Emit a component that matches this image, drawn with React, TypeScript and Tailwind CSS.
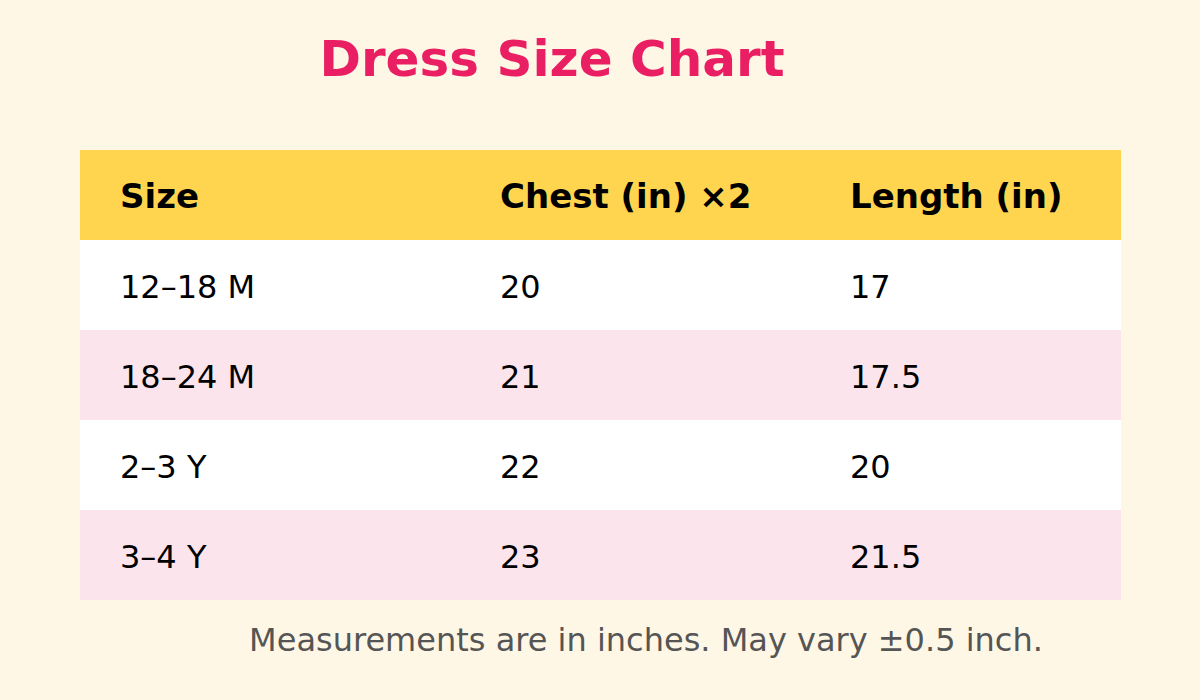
import React from 'react';

const rows = [
  { size: '12–18 M', chest: '20', length: '17' },
  { size: '18–24 M', chest: '21', length: '17.5' },
  { size: '2–3 Y', chest: '22', length: '20' },
  { size: '3–4 Y', chest: '23', length: '21.5' },
];

const App: React.FC = () => {
  return (
    <div
      className="w-[1200px] h-[700px] bg-[#fff7e6] flex flex-col"
      style={{ fontFamily: '"DejaVu Sans", Verdana, sans-serif' }}
    >
      {/* Title */}
      <div className="h-[150px] pr-[96px] pb-[32px] flex items-center justify-center">
        <h1 className="text-[50px] font-bold text-[#e91e63] leading-none">Dress Size Chart</h1>
      </div>

      {/* Table */}
      <div className="mx-[80px] w-[1041px] flex flex-col text-[32px] text-black">
        <div className="h-[90px] bg-[#ffd54f] flex items-center font-bold text-[34px] pt-[2px]">
          <div className="w-[380px] pl-[40px]">Size</div>
          <div className="w-[350px] pl-[40px]">Chest (in) ×2</div>
          <div className="flex-1 pl-[40px]">Length (in)</div>
        </div>
        {rows.map((r, i) => (
          <div
            key={r.size}
            className={`h-[90px] flex items-center pt-[4px] ${i % 2 === 0 ? 'bg-white' : 'bg-[#fce4ec]'}`}
          >
            <div className="w-[380px] pl-[40px]">{r.size}</div>
            <div className="w-[350px] pl-[40px]">{r.chest}</div>
            <div className="flex-1 pl-[40px]">{r.length}</div>
          </div>
        ))}
      </div>

      {/* Footnote */}
      <div className="h-[80px] pl-[92px] flex items-center justify-center">
        <p className="text-[32px] text-[#555555] leading-none">Measurements are in inches. May vary ±0.5 inch.</p>
      </div>
    </div>
  );
};

export default App;
